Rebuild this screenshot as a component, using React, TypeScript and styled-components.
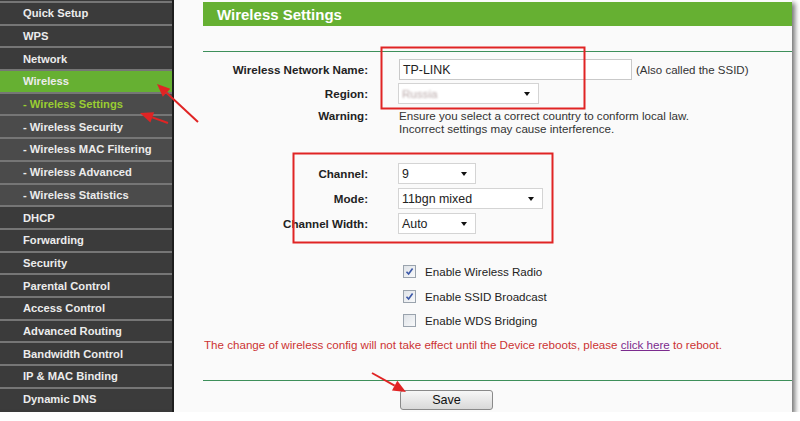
import styled, { createGlobalStyle } from "styled-components";

const GlobalStyle = createGlobalStyle`
  html, body {
    margin: 0;
    padding: 0;
    background: #ffffff;
  }
  body {
    font-family: "Liberation Sans", Arial, sans-serif;
  }
`;

const Frame = styled.div`
  position: relative;
  width: 792px;
  height: 412px;
  display: flex;
  background: #fafafa;
  box-shadow: 3px 3px 5px rgba(0, 0, 0, 0.55);
  overflow: hidden;
`;

const Sidebar = styled.nav`
  width: 172px;
  flex: none;
  background: #3a3a3a;
  border-right: 2px solid #1e1e1e;
  padding-top: 1px;
  display: flex;
  flex-direction: column;
`;

const NavItem = styled.div<{ $sub?: boolean; $active?: boolean; $current?: boolean }>`
  height: 20.7px;
  border-top: 2px solid #767676;
  display: flex;
  align-items: center;
  padding-left: 23px;
  background: ${(p) => (p.$active ? "#66b032" : p.$sub ? "#4b4b4b" : "#3b3b3b")};
  color: ${(p) => (p.$current ? "#9acd32" : "#ececec")};
  font-size: 11.2px;
  font-weight: bold;
  white-space: nowrap;
`;

const Main = styled.main`
  flex: 1;
  padding: 2px 0 0 29px;
  display: flex;
  flex-direction: column;
`;

const TitleBar = styled.div`
  height: 24px;
  background: #66b032;
  color: #fff;
  font-size: 15px;
  font-weight: bold;
  display: flex;
  align-items: center;
  padding-left: 14px;
`;

const Rule = styled.div<{ $top: number }>`
  height: 1px;
  background: #3d8f5a;
  margin-top: ${(p) => p.$top}px;
`;

const Row = styled.div<{ $top: number }>`
  display: grid;
  grid-template-columns: 165px auto;
  column-gap: 31px;
  align-items: center;
  margin-top: ${(p) => p.$top}px;
`;

const Label = styled.div<{ $top?: boolean }>`
  text-align: right;
  font-size: 11.6px;
  font-weight: bold;
  color: #222;
  white-space: nowrap;
  align-self: ${(p) => (p.$top ? "start" : "center")};
  line-height: 13px;
`;

const Field = styled.div`
  display: flex;
  align-items: center;
  gap: 4px;
  font-size: 11.5px;
  color: #333;
`;

const TextInput = styled.div`
  width: 228px;
  height: 19px;
  border: 1px solid #c9c9c9;
  background: #fff;
  font-size: 12.4px;
  color: #222;
  display: flex;
  align-items: center;
  padding-left: 3px;
`;

const Select = styled.div<{ $w: number }>`
  position: relative;
  width: ${(p) => p.$w - 2}px;
  height: 19px;
  border: 1px solid #d4d4d4;
  background: #fff;
  font-size: 12.4px;
  color: #222;
  display: flex;
  align-items: center;
  padding-left: 3px;
  box-sizing: content-box;
  margin-left: -1px;

  &::after {
    content: "";
    position: absolute;
    right: 8px;
    top: 8px;
    border-left: 3.5px solid transparent;
    border-right: 3.5px solid transparent;
    border-top: 4px solid #111;
  }
`;

const Blurred = styled.span`
  color: #b8a8a8;
  filter: blur(1.3px);
  font-size: 11.6px;
`;

const Note = styled.div`
  font-size: 11.6px;
  line-height: 13px;
  color: #333;
`;

const CheckRow = styled.div<{ $top: number }>`
  display: flex;
  align-items: center;
  gap: 9px;
  padding-left: 200px;
  height: 20px;
  margin-top: ${(p) => p.$top}px;
  font-size: 11.6px;
  color: #222;
`;

const Box = styled.span`
  width: 11px;
  height: 11px;
  border: 1px solid #9aa3ad;
  background: linear-gradient(135deg, #dfe3e8, #f8f9fa);
  display: inline-flex;
  align-items: center;
  justify-content: center;
`;

const Warn = styled.div`
  margin-top: 8px;
  margin-left: 1px;
  height: 14px;
  font-size: 11.6px;
  color: #cc3333;
  white-space: nowrap;
`;

const Link = styled.a`
  color: #7b2b8e;
  text-decoration: underline;
`;

const SaveWrap = styled.div`
  margin-top: 9px;
  padding-left: 197px;
`;

const SaveButton = styled.button`
  width: 93px;
  height: 20px;
  border: 1px solid #8a8a8a;
  border-radius: 3px;
  background: linear-gradient(#f7f7f7, #d9d9d9);
  font-family: "Liberation Sans", Arial, sans-serif;
  font-size: 12.6px;
  color: #111;
  padding: 0;
`;

const Overlay = styled.svg`
  position: absolute;
  left: 0;
  top: 0;
  pointer-events: none;
`;

const Check = ({ on }: { on?: boolean }) => (
  <Box>
    {on && (
      <svg width="9" height="9" viewBox="0 0 9 9">
        <path d="M1.5 4.8 L3.6 7 L7.6 1.5" fill="none" stroke="#3b58a8" strokeWidth="1.6" />
      </svg>
    )}
  </Box>
);

const navs = [
  { menu: "Quick Setup" },
  { menu: "WPS" },
  { menu: "Network" },
  { menu: "Wireless", active: true },
  { menu: "- Wireless Settings", sub: true, current: true },
  { menu: "- Wireless Security", sub: true },
  { menu: "- Wireless MAC Filtering", sub: true },
  { menu: "- Wireless Advanced", sub: true },
  { menu: "- Wireless Statistics", sub: true },
  { menu: "DHCP" },
  { menu: "Forwarding" },
  { menu: "Security" },
  { menu: "Parental Control" },
  { menu: "Access Control" },
  { menu: "Advanced Routing" },
  { menu: "Bandwidth Control" },
  { menu: "IP & MAC Binding" },
  { menu: "Dynamic DNS" },
];

const Arrow = ({ x1, y1, x2, y2 }: { x1: number; y1: number; x2: number; y2: number }) => {
  const a = Math.atan2(y2 - y1, x2 - x1);
  const len = 13;
  const w = 5.5;
  const bx = x2 - len * Math.cos(a);
  const by = y2 - len * Math.sin(a);
  const px = -Math.sin(a) * w;
  const py = Math.cos(a) * w;
  return (
    <g>
      <line x1={x1} y1={y1} x2={bx} y2={by} stroke="#e02424" strokeWidth="2" />
      <polygon points={`${x2},${y2} ${bx + px},${by + py} ${bx - px},${by - py}`} fill="#e02424" />
    </g>
  );
};

export default function App() {
  return (
    <>
      <GlobalStyle />
      <Frame>
        <Sidebar>
          {navs.map((nav, i) => (
            <NavItem key={i} $sub={nav.sub} $active={nav.active} $current={nav.current}>
              {nav.menu}
            </NavItem>
          ))}
        </Sidebar>
        <Main>
          <TitleBar>Wireless Settings</TitleBar>
          <Rule $top={25} />
          <Row $top={7}>
            <Label>Wireless Network Name:</Label>
            <Field>
              <TextInput>TP-LINK</TextInput>
              <span>(Also called the SSID)</span>
            </Field>
          </Row>
          <Row $top={3}>
            <Label>Region:</Label>
            <Field>
              <Select $w={138}>
                <Blurred>Russia</Blurred>
              </Select>
            </Field>
          </Row>
          <Row $top={5}>
            <Label $top>Warning:</Label>
            <Note>
              Ensure you select a correct country to conform local law.
              <br />
              Incorrect settings may cause interference.
            </Note>
          </Row>
          <Row $top={28}>
            <Label>Channel:</Label>
            <Field>
              <Select $w={75}>9</Select>
            </Field>
          </Row>
          <Row $top={4}>
            <Label>Mode:</Label>
            <Field>
              <Select $w={142}>11bgn mixed</Select>
            </Field>
          </Row>
          <Row $top={4}>
            <Label>Channel Width:</Label>
            <Field>
              <Select $w={75}>Auto</Select>
            </Field>
          </Row>
          <CheckRow $top={27}>
            <Check on />
            Enable Wireless Radio
          </CheckRow>
          <CheckRow $top={5}>
            <Check on />
            Enable SSID Broadcast
          </CheckRow>
          <CheckRow $top={4}>
            <Check />
            Enable WDS Bridging
          </CheckRow>
          <Warn>
            The change of wireless config will not take effect until the Device reboots, please{" "}
            <Link>click here</Link> to reboot.
          </Warn>
          <Rule $top={28} />
          <SaveWrap>
            <SaveButton>Save</SaveButton>
          </SaveWrap>
        </Main>
        <Overlay width="792" height="412">
          <rect x="381.5" y="47.5" width="203" height="61" fill="none" stroke="#e02424" strokeWidth="2" />
          <rect x="293.5" y="153.5" width="259" height="89" fill="none" stroke="#e02424" strokeWidth="2" />
          <Arrow x1={198} y1={122} x2={157} y2={84} />
          <Arrow x1={168} y1={123} x2={140} y2={113} />
          <Arrow x1={372} y1={373} x2={406} y2={392} />
        </Overlay>
      </Frame>
    </>
  );
}
